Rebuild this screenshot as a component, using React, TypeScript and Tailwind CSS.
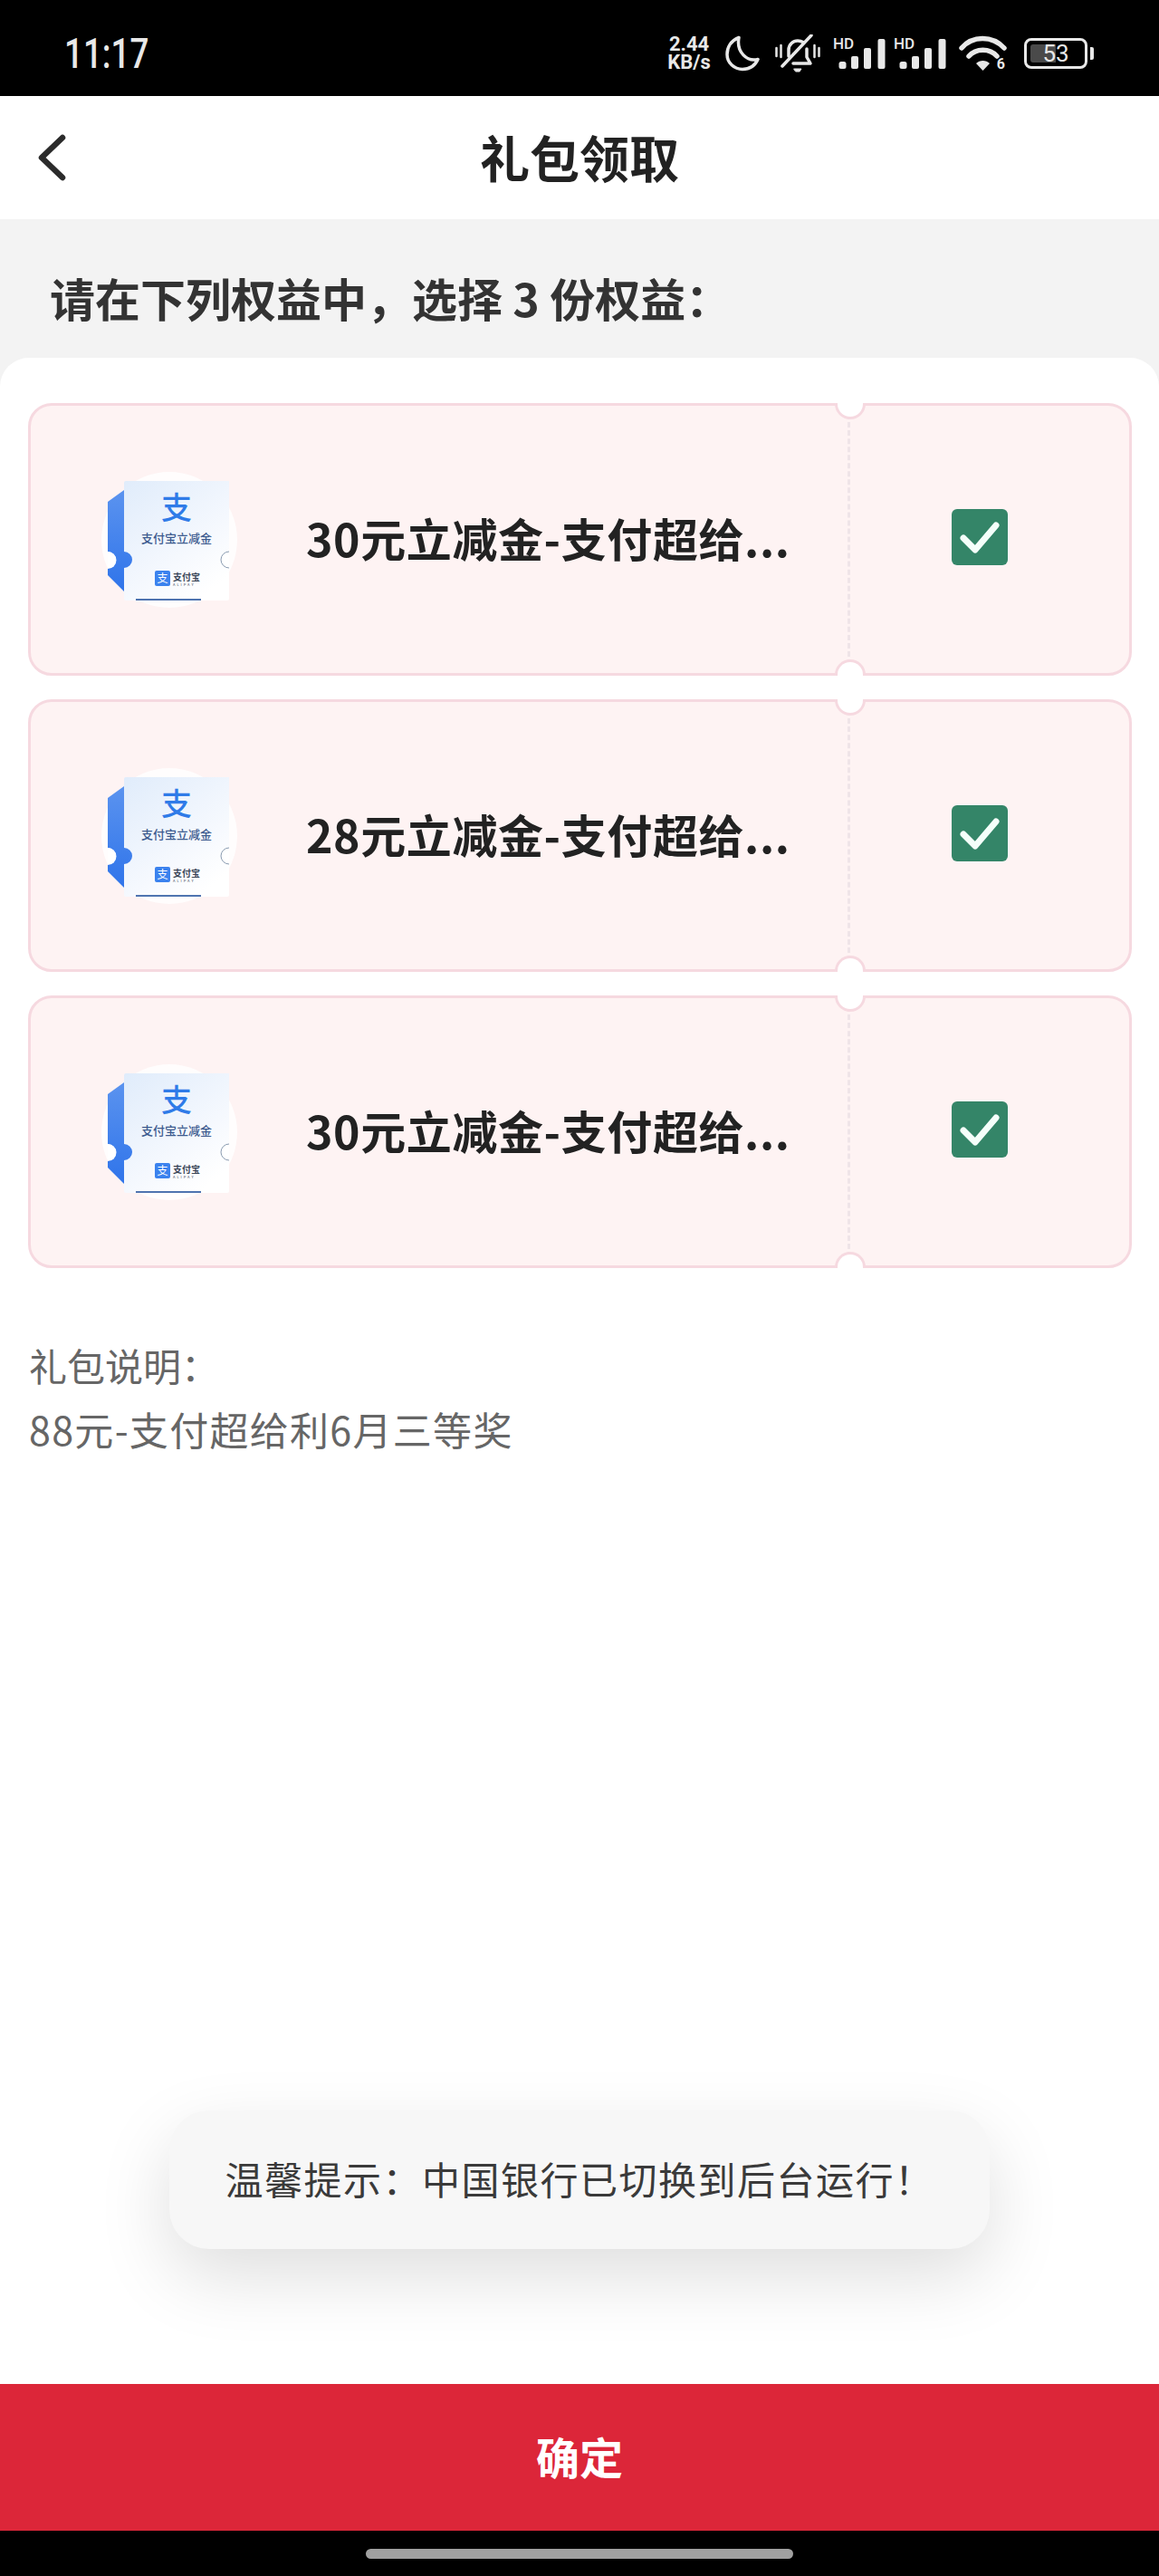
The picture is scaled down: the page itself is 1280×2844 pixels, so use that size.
const items = ['30元立减金-支付超给...', '28元立减金-支付超给...', '30元立减金-支付超给...'];

const MoonIcon = () => (
	<svg width="38" height="40" viewBox="0 0 38 40" fill="none" stroke="#e8e8e8" strokeWidth="3.5" strokeLinejoin="round">
		<path d="M15 2.5C6 6 2 13.500 2 21c0 9.500 8 16.500 17 16.500 8 0 14-4.500 17-11-12 3-24-8-21-24Z" />
	</svg>
);

const MuteBellIcon = () => (
	<svg width="50" height="42" viewBox="0 0 50 42" fill="none" stroke="#e8e8e8" strokeWidth="3.500" strokeLinecap="round" strokeLinejoin="round">
		<path d="M1.500 15v9M6.500 12v13M43.500 12v13M48.500 15v9" strokeWidth="2.500" />
		<path d="M15 24V17c0-6 5-10 10-10 3 0 5 1 7 2" />
		<path d="M35 16v9l4 7H20" />
		<path d="M8 35 40 1" />
		<path d="M21 38h8l-2 3h-4Z" fill="#e8e8e8" strokeWidth="1" />
	</svg>
);

const SignalIcon = () => (
	<div className="relative w-[58px] h-[36px]">
		<span className="absolute left-0 -top-[1px] text-[17px] leading-[17px] font-medium text-[#e8e8e8] font-['Roboto']">HD</span>
		<svg width="58" height="36" viewBox="0 0 58 36" fill="#e8e8e8">
			<rect x="6.500" y="27" width="8" height="8" rx="2.500" />
			<rect x="20" y="21" width="8" height="14" rx="2" />
			<rect x="34" y="12" width="8" height="23" rx="2" />
			<rect x="49.500" y="2" width="8" height="33" rx="2" />
		</svg>
	</div>
);

const WifiIcon = () => (
	<div className="relative w-[54px] h-[40px]">
		<svg width="54" height="40" viewBox="0 0 54 40" fill="none" stroke="#e8e8e8" strokeWidth="5.500" strokeLinecap="round">
			<path d="M3 14C15 0 37 0 50 14" />
			<path d="M11 23c8-9 23-9 31 0" />
			<path d="M19 31l7.500 8 7.500-8c-4-4-11-4-15 0Z" fill="#e8e8e8" stroke="none" />
		</svg>
		<span className="absolute right-[3px] bottom-0 text-[16px] leading-[16px] font-bold text-[#e8e8e8] font-['Roboto']">6</span>
	</div>
);

const BatteryIcon = () => (
	<div className="flex items-center gap-[3px]">
		<div className="relative w-[70px] h-[34px] rounded-[8px] border-[3px] border-[#e8e8e8] flex items-center justify-center overflow-hidden">
			<div className="absolute left-[4px] top-[4px] bottom-[4px] w-[28px] rounded-l-[3px] bg-[#4a4a4a]" />
			<span className="relative text-[26px] leading-none text-[#e8e8e8] font-['Roboto']">53</span>
		</div>
		<div className="w-[4px] h-[14px] rounded-r-[2px] bg-[#e8e8e8]" />
	</div>
);

const StatusBar = () => (
	<div className="flex items-center justify-between h-[106px] bg-black pt-[12px] pl-[71px] pr-[72px] shrink-0">
		<span className="text-[46px] leading-none font-medium text-[#e8e8e8] font-['Roboto'] origin-left scale-x-[0.8]">11:17</span>
		<div className="flex items-center">
			<div className="flex flex-col items-center w-[56px] font-['Roboto'] font-bold text-[#e8e8e8] text-[22px] leading-[20px]">
				<span>2.44</span>
				<span>KB/s</span>
			</div>
			<div className="ml-[12px]"><MoonIcon /></div>
			<div className="ml-[17px]"><MuteBellIcon /></div>
			<div className="ml-[14px]"><SignalIcon /></div>
			<div className="ml-[9px]"><SignalIcon /></div>
			<div className="ml-[14px]"><WifiIcon /></div>
			<div className="ml-[18px]"><BatteryIcon /></div>
		</div>
	</div>
);

const VoucherIcon = () => (
	<svg width="150" height="150" viewBox="0 0 150 150" className="shrink-0">
		<defs>
			<linearGradient id="voucherBg" x1="0" y1="0" x2="0.7" y2="1">
				<stop offset="0" stopColor="#e0ecfb" />
				<stop offset="0.7" stopColor="#f6f9fe" />
				<stop offset="1" stopColor="#ffffff" />
			</linearGradient>
			<linearGradient id="voucherStrip" x1="0" y1="0" x2="0" y2="1">
				<stop offset="0" stopColor="#5b93ef" />
				<stop offset="1" stopColor="#2f74ea" />
			</linearGradient>
		</defs>
		<circle cx="75" cy="75" r="75" fill="#ffffff" opacity="0.8" />
		<path d="M25 12q0-2 2-2H141V88a9 9 0 0 0 0 18V140q0 2-2 2H27q-2 0-2-2Z" fill="url(#voucherBg)" />
		<path d="M25 20 7 33V88a9 9 0 0 1 0 18v8l18 18v-26a9 9 0 0 0 0-18Z" fill="url(#voucherStrip)" />
		<path d="M7 88a9.500 9.500 0 0 1 0 19" fill="#ffffff" />
		<path d="M141 88a9 9 0 0 0 0 18" fill="#ffffff" stroke="#8a9bb0" strokeWidth="1" />
		<rect x="38" y="140" width="72" height="2" fill="#4f74b0" />
		<text x="83" y="52" textAnchor="middle" fontSize="34" fontWeight="500" fill="#2f7be8">支</text>
		<text x="83" y="78" textAnchor="middle" fontSize="13" fontWeight="500" fill="#3d5b8f">支付宝立减金</text>
		<rect x="59" y="109" width="17" height="17" rx="2" fill="#3b82ee" />
		<text x="67.500" y="122" textAnchor="middle" fontSize="12" fill="#ffffff">支</text>
		<text x="79" y="120" fontSize="10" fontWeight="700" fill="#3a4658">支付宝</text>
		<text x="79" y="126" fontSize="4" fill="#3a4658" letterSpacing="2">ALIPAY</text>
	</svg>
);

const CheckBox = () => (
	<div className="w-[62px] h-[62px] rounded-[6px] bg-[#348568] flex items-center justify-center">
		<svg width="46" height="38" viewBox="0 0 46 38" fill="none" stroke="#f4fffa" strokeWidth="7" strokeLinecap="round" strokeLinejoin="round">
			<path d="M5 20 18 33 41 6" />
		</svg>
	</div>
);

const TicketCard = ({ title }: { title: string }) => (
	<div className="relative flex h-[301px] rounded-[26px] border-[3px] border-[#f6d9e0] bg-[#fef3f3]">
		<div className="flex items-center w-[905px] pl-[78px] border-r-[3px] border-dashed border-[#efe4e8]">
			<VoucherIcon />
			<span className="ml-[76px] pb-[6px] text-[50px] leading-none tracking-[0.6px] font-semibold text-[#222222] whitespace-nowrap">{title}</span>
		</div>
		<div className="flex-1 flex items-center justify-center pr-[23px] pb-[6px]">
			<CheckBox />
		</div>
		<div className="absolute left-[888px] -top-[3px] w-[34px] h-[18px] rounded-b-[17px] border-[3px] border-t-0 border-[#f6d9e0] bg-white" />
		<div className="absolute left-[888px] -bottom-[3px] w-[34px] h-[18px] rounded-t-[17px] border-[3px] border-b-0 border-[#f6d9e0] bg-white" />
	</div>
);

export default function App() {
	return (
		<div className="relative flex flex-col h-[2844px] w-full overflow-hidden bg-[#f3f3f3] font-['Noto_Sans_CJK_SC',sans-serif]">
			<StatusBar />
			<div className="flex items-center justify-center relative h-[136px] pb-[4px] bg-white shrink-0">
				<svg width="34" height="52" viewBox="0 0 34 52" fill="none" stroke="#2b2b2b" strokeWidth="6.500" strokeLinecap="round" strokeLinejoin="round" className="absolute left-[40px] top-[42px]">
					<path d="M29 4 6 26l23 22" />
				</svg>
				<span className="text-[55px] leading-none font-bold text-[#222222]">礼包领取</span>
			</div>
			<div className="flex items-center h-[153px] pl-[55px] pt-[18px] shrink-0">
				<span className="text-[50px] leading-none font-bold text-[#333333]">{'请在下列权益中\uFF0C选择 3 份权益\uFF1A'}</span>
			</div>
			<div className="flex-1 flex flex-col rounded-t-[32px] bg-white pt-[50px]">
				<div className="flex flex-col gap-[26px] pl-[31px] pr-[30px]">
					{items.map((title, index) => (
						<TicketCard key={index} title={title} />
					))}
				</div>
				<div className="mt-[71px] pl-[32px] text-[#666666]">
					<p className="text-[42px] leading-[71px]">{'礼包说明\uFF1A'}</p>
					<p className="text-[43px] leading-[71px] tracking-[1.300px]">88元-支付超给利6月三等奖</p>
				</div>
			</div>
			<div className="flex items-center justify-center h-[162px] pb-[4px] bg-[#dc2639] shrink-0">
				<span className="text-[48px] leading-none font-bold text-white">确定</span>
			</div>
			<div className="flex items-center justify-center h-[50px] bg-black shrink-0">
				<div className="w-[472px] h-[11px] rounded-full bg-[#a0a0a0]" />
			</div>
			<div className="absolute left-[187px] top-[2330px] flex items-center justify-center w-[906px] h-[153px] pb-[3px] rounded-[44px] bg-[#f7f7f7] shadow-[0_30px_80px_rgba(0,0,0,0.13)]">
				<span className="text-[42px] leading-none tracking-[1.500px] text-[#3a3a3a] whitespace-nowrap">{'温馨提示\uFF1A中国银行已切换到后台运行\uFF01'}</span>
			</div>
		</div>
	);
}
